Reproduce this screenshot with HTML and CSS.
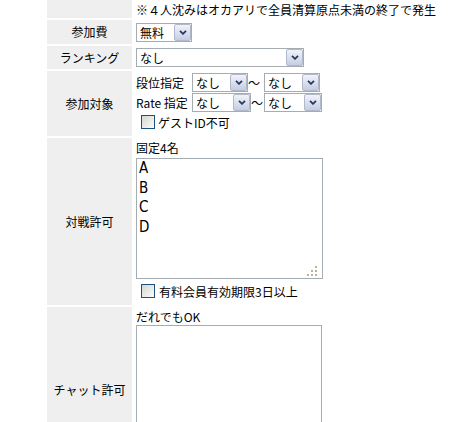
FILE: index.html
```html
<!DOCTYPE html>
<html lang="ja">
<head>
<meta charset="utf-8">
<title>設定</title>
<link rel="stylesheet" href="styles.css">
</head>
<body>
<table class="form">
  <tr>
    <td class="lbl"></td>
    <td class="val r1">※４人沈みはオカアリで全員清算原点未満の終了で発生</td>
  </tr>
  <tr>
    <td class="lbl">参加費</td>
    <td class="val r2">
      <div class="sel w56"><select><option>無料</option></select><span class="btn"><svg width="8" height="5" viewBox="0 0 8 5"><polyline points="1,0.8 4,3.8 7,0.8" fill="none" stroke="#25395f" stroke-width="1.8"/></svg></span></div>
    </td>
  </tr>
  <tr>
    <td class="lbl">ランキング</td>
    <td class="val r3">
      <div class="sel w168"><select><option>なし</option></select><span class="btn"><svg width="8" height="5" viewBox="0 0 8 5"><polyline points="1,0.8 4,3.8 7,0.8" fill="none" stroke="#25395f" stroke-width="1.8"/></svg></span></div>
    </td>
  </tr>
  <tr>
    <td class="lbl">参加対象</td>
    <td class="val r4">
      <div class="rrow">
        <span class="rlabel">段位指定</span>
        <div class="sel w56"><select><option>なし</option></select><span class="btn"><svg width="8" height="5" viewBox="0 0 8 5"><polyline points="1,0.8 4,3.8 7,0.8" fill="none" stroke="#25395f" stroke-width="1.8"/></svg></span></div>
        <span class="tilde t16">〜</span>
        <div class="sel w56"><select><option>なし</option></select><span class="btn"><svg width="8" height="5" viewBox="0 0 8 5"><polyline points="1,0.8 4,3.8 7,0.8" fill="none" stroke="#25395f" stroke-width="1.8"/></svg></span></div>
      </div>
      <div class="rrow">
        <span class="rlabel">Rate 指定</span>
        <div class="sel w59"><select><option>なし</option></select><span class="btn"><svg width="8" height="5" viewBox="0 0 8 5"><polyline points="1,0.8 4,3.8 7,0.8" fill="none" stroke="#25395f" stroke-width="1.8"/></svg></span></div>
        <span class="tilde t13">〜</span>
        <div class="sel w58"><select><option>なし</option></select><span class="btn"><svg width="8" height="5" viewBox="0 0 8 5"><polyline points="1,0.8 4,3.8 7,0.8" fill="none" stroke="#25395f" stroke-width="1.8"/></svg></span></div>
      </div>
      <label class="cbline cb-a"><input type="checkbox" class="cb"><span class="cbtext">ゲストID不可</span></label>
    </td>
  </tr>
  <tr>
    <td class="lbl">対戦許可</td>
    <td class="val r5">
      <div class="cap">固定4名</div>
      <div class="ta-wrap w187 mt2">
        <textarea class="ta">A
B
C
D</textarea>
        <svg class="grip" width="10" height="10" viewBox="0 0 10 10"><g fill="#b7b29c"><rect x="8" y="0" width="2" height="2"/><rect x="4" y="4" width="2" height="2"/><rect x="8" y="4" width="2" height="2"/><rect x="0" y="8" width="2" height="2"/><rect x="4" y="8" width="2" height="2"/><rect x="8" y="8" width="2" height="2"/></g></svg>
      </div>
      <label class="cbline cb-b"><input type="checkbox" class="cb"><span class="cbtext">有料会員有効期限3日以上</span></label>
    </td>
  </tr>
  <tr>
    <td class="lbl">チャット許可</td>
    <td class="val r6">
      <div class="cap">だれでもOK</div>
      <div class="ta-wrap w186">
        <textarea class="ta"></textarea>
        <svg class="grip" width="10" height="10" viewBox="0 0 10 10"><g fill="#b7b29c"><rect x="8" y="0" width="2" height="2"/><rect x="4" y="4" width="2" height="2"/><rect x="8" y="4" width="2" height="2"/><rect x="0" y="8" width="2" height="2"/><rect x="4" y="8" width="2" height="2"/><rect x="8" y="8" width="2" height="2"/></g></svg>
      </div>
    </td>
  </tr>
</table>
</body>
</html>
```

FILE: styles.css
```css
html {
  overflow: hidden;
}

body {
  margin: 0;
  background: #fff;
  color: #000;
  font-family: "Noto Sans CJK JP", sans-serif;
  font-size: 12px;
  line-height: 14px;
}

.form {
  margin: -3px 0 0 45px;
  border-collapse: separate;
  border-spacing: 2px;
}

.lbl {
  width: 85px;
  padding: 0;
  background: #efefef;
  text-align: center;
  vertical-align: middle;
  white-space: nowrap;
}

.val {
  padding: 2px 2px 1px;
  vertical-align: top;
  white-space: nowrap;
  text-align: left;
}

.r1 { padding: 4px 2px 1px; }
.r2 { padding: 3px 2px 2px; }
.r3 { padding: 2px 2px 2px; }
.r4 { padding: 2px 2px 1px; }
.r5 { padding: 2px 2px 1px; }
.r6 { padding: 2px 2px 26px; }

/* select box */
.sel {
  display: flex;
  flex: none;
  height: 19px;
  box-sizing: border-box;
  border: 1px solid #a5acb2;
  background: #fff;
}

.sel select {
  appearance: none;
  -webkit-appearance: none;
  flex: 1;
  min-width: 0;
  height: 17px;
  margin: 0;
  padding: 0 0 0 3px;
  border: 0;
  outline: 0;
  background: transparent;
  color: #000;
  font: inherit;
  line-height: 17px;
}

.btn {
  flex: none;
  width: 17px;
  height: 17px;
  box-sizing: border-box;
  border: 1px solid #b1b8cc;
  border-radius: 2px;
  background: linear-gradient(#f1f3fa, #c6cde2);
  display: flex;
  align-items: center;
  justify-content: center;
}

.btn svg {
  display: block;
}

.w56 { width: 56px; }
.w58 { width: 58px; }
.w59 { width: 59px; }
.w168 { width: 168px; }

/* rank rows */
.rrow {
  display: flex;
  align-items: center;
  height: 19px;
}

.rrow + .rrow {
  margin-top: 1px;
}

.rlabel {
  flex: none;
  width: 56px;
}

.tilde {
  flex: none;
  text-align: left;
}

.t16 { width: 16px; }
.t13 { width: 13px; }

/* checkbox */
.cbline {
  display: flex;
  align-items: flex-start;
}

.cb-a {
  height: 23px;
  padding-top: 3px;
  box-sizing: border-box;
}

.cb-b {
  height: 25px;
  padding-top: 5px;
  box-sizing: border-box;
}

.cb {
  appearance: none;
  -webkit-appearance: none;
  flex: none;
  width: 14px;
  height: 14px;
  margin: 0 3px 0 5px;
  box-sizing: border-box;
  border: 1px solid #1c5180;
  background: linear-gradient(135deg, #d6d6d0, #fbfbfa);
}

.cb-b .cb {
  margin-right: 4px;
}

.cbtext {
  padding-top: 1px;
}

/* captions + textareas */
.cap {
  height: 16px;
  line-height: 16px;
}

.ta-wrap {
  position: relative;
}

.w187 { width: 187px; }
.w186 { width: 186px; }
.mt2 { margin-top: 2px; }

.ta {
  display: block;
  width: 100%;
  height: 121px;
  box-sizing: border-box;
  margin: 0;
  padding: 0 2px;
  border: 1px solid #a5acb2;
  background: #fff;
  color: #000;
  resize: none;
  overflow: hidden;
  font-family: "Liberation Sans Narrow", "DejaVu Sans Condensed", sans-serif;
  font-size: 15px;
  line-height: 19.5px;
}

.grip {
  position: absolute;
  right: 6px;
  bottom: 3px;
}
```
